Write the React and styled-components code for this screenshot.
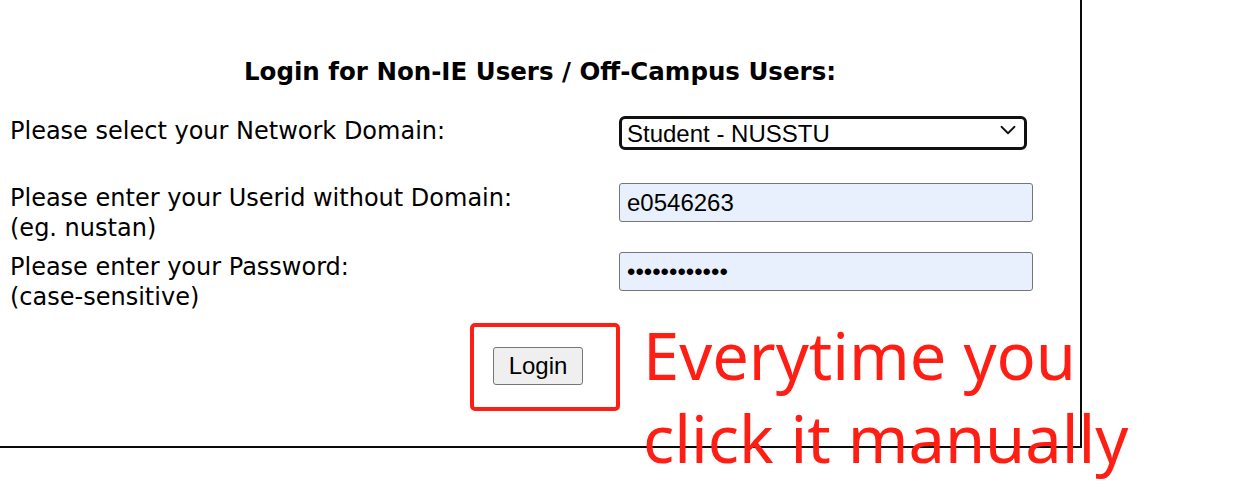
import React from 'react';
import styled, { createGlobalStyle } from 'styled-components';
import { ChevronDown } from 'lucide-react';

const GlobalStyle = createGlobalStyle`
  html, body {
    margin: 0;
    padding: 0;
    background: #ffffff;
  }
  body {
    width: 1237px;
    height: 492px;
    overflow: hidden;
    position: relative;
  }
`;

const Panel = styled.div`
  box-sizing: border-box;
  width: 1082px;
  height: 448px;
  border-right: 2px solid #0a0a0a;
  border-bottom: 2px solid #0a0a0a;
  padding: 58px 0 0 10px;
  font-family: 'DejaVu Sans', Verdana, sans-serif;
  color: #000;
`;

const Title = styled.h3`
  margin: 0 0 30px;
  padding-right: 10px;
  text-align: center;
  font-size: 24.5px;
  font-weight: bold;
  line-height: 28px;
`;

const Row = styled.div`
  display: flex;
  align-items: flex-start;
  margin-bottom: ${(p) => p.$gap || 0}px;
`;

const Label = styled.div`
  width: 609px;
  flex: none;
  font-size: 24px;
  line-height: 30px;
`;

const SelectBox = styled.div`
  position: relative;
  width: 408px;
  height: 34px;

  & svg {
    position: absolute;
    right: 6px;
    top: 1px;
    pointer-events: none;
  }
`;

const Select = styled.select`
  appearance: none;
  box-sizing: border-box;
  width: 100%;
  height: 100%;
  border: 3px solid #111;
  border-radius: 6px;
  background: #fff;
  font-family: 'Liberation Sans', Arial, sans-serif;
  font-size: 24px;
  color: #000;
  padding: 0 5px;
  outline: none;
`;

const Field = styled.input`
  box-sizing: border-box;
  width: 414px;
  height: 39px;
  border: 1px solid #767676;
  border-radius: 3px;
  background: #e8f0fe;
  font-family: 'Liberation Sans', Arial, sans-serif;
  font-size: 24px;
  color: #000;
  padding: 0 7px;
  outline: none;
`;

const Actions = styled.div`
  display: flex;
  justify-content: center;
  padding: 35px 14px 0 0;
`;

const Button = styled.button`
  box-sizing: border-box;
  width: 90px;
  height: 38px;
  padding: 0;
  border: 1px solid #767676;
  border-radius: 3px;
  background: #efefef;
  font-family: 'Liberation Sans', Arial, sans-serif;
  font-size: 24px;
  color: #000;
  cursor: pointer;
`;

const Highlight = styled.div`
  position: absolute;
  left: 470px;
  top: 323px;
  width: 150px;
  height: 88px;
  box-sizing: border-box;
  border: 4px solid #ff1e14;
  border-radius: 5px;
  pointer-events: none;
`;

const Note = styled.div`
  position: absolute;
  left: 643px;
  top: 314px;
  font-family: 'Noto Sans', 'Open Sans', sans-serif;
  font-size: 65px;
  line-height: 83px;
  color: #ff1e14;
  white-space: nowrap;
  pointer-events: none;
`;

export default function App() {
  return (
    <>
      <GlobalStyle />
      <Panel>
        <Title>Login for Non-IE Users / Off-Campus Users:</Title>
        <Row $gap={33}>
          <Label>Please select your Network Domain:</Label>
          <SelectBox>
            <Select defaultValue="NUSSTU">
              <option value="NUSSTU">Student - NUSSTU</option>
              <option value="NUSSTF">Staff - NUSSTF</option>
            </Select>
            <ChevronDown size={26} strokeWidth={1.7} color="#111" />
          </SelectBox>
        </Row>
        <Row $gap={9}>
          <Label>
            Please enter your Userid without Domain:
            <br />
            (eg. nustan)
          </Label>
          <Field type="text" defaultValue="e0546263" />
        </Row>
        <Row>
          <Label>
            Please enter your Password:
            <br />
            (case-sensitive)
          </Label>
          <Field type="password" defaultValue="abcdefghijkl" />
        </Row>
        <Actions>
          <Button>Login</Button>
        </Actions>
      </Panel>
      <Highlight />
      <Note>
        Everytime you
        <br />
        click it manually
      </Note>
    </>
  );
}
